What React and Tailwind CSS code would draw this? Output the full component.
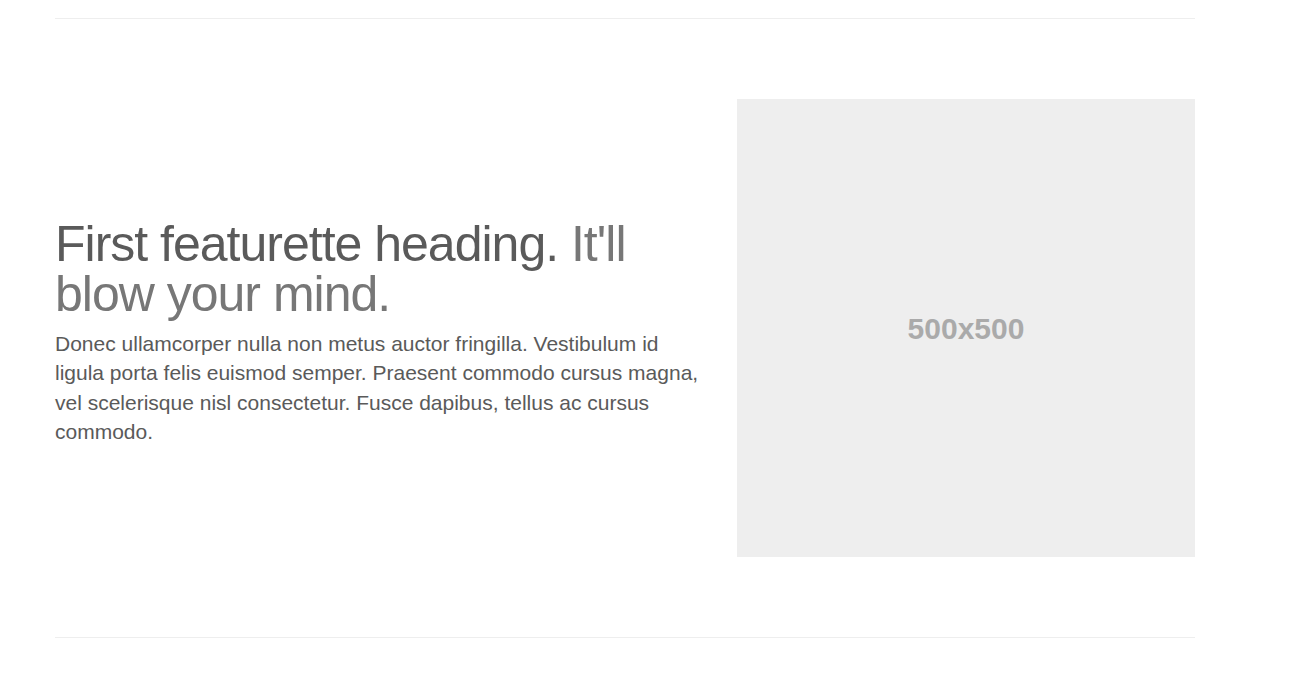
export default function App() {
  return (
    <div className="min-h-screen bg-white text-[#5a5a5a]" style={{ fontFamily: '"Liberation Sans", Arial, sans-serif' }}>
      <div className="w-[1140px] ml-[55px] pt-[18px]">
        <hr className="border-0 border-t border-[#eee]" />

        <div className="flex mt-[80px]">
          <div className="w-[652px]">
            <h2 className="mt-[120px] mb-[10px] text-[50px] leading-none tracking-[-1px] font-normal">
              First featurette heading. <span className="text-[#777]">It'll blow your mind.</span>
            </h2>
            <p className="text-[21px] leading-[1.4] mb-[20px]">
              Donec ullamcorper nulla non metus auctor fringilla. Vestibulum id ligula porta felis euismod semper. Praesent commodo cursus magna, vel scelerisque nisl consectetur. Fusce dapibus, tellus ac cursus commodo.
            </p>
          </div>

          {/* placeholder image */}
          <div className="ml-auto w-[458px] h-[458px] bg-[#eee] flex items-center justify-center">
            <span className="text-[30px] font-bold text-[#aaa]">500x500</span>
          </div>
        </div>

        <hr className="mt-[80px] border-0 border-t border-[#eee]" />
      </div>
    </div>
  );
}
